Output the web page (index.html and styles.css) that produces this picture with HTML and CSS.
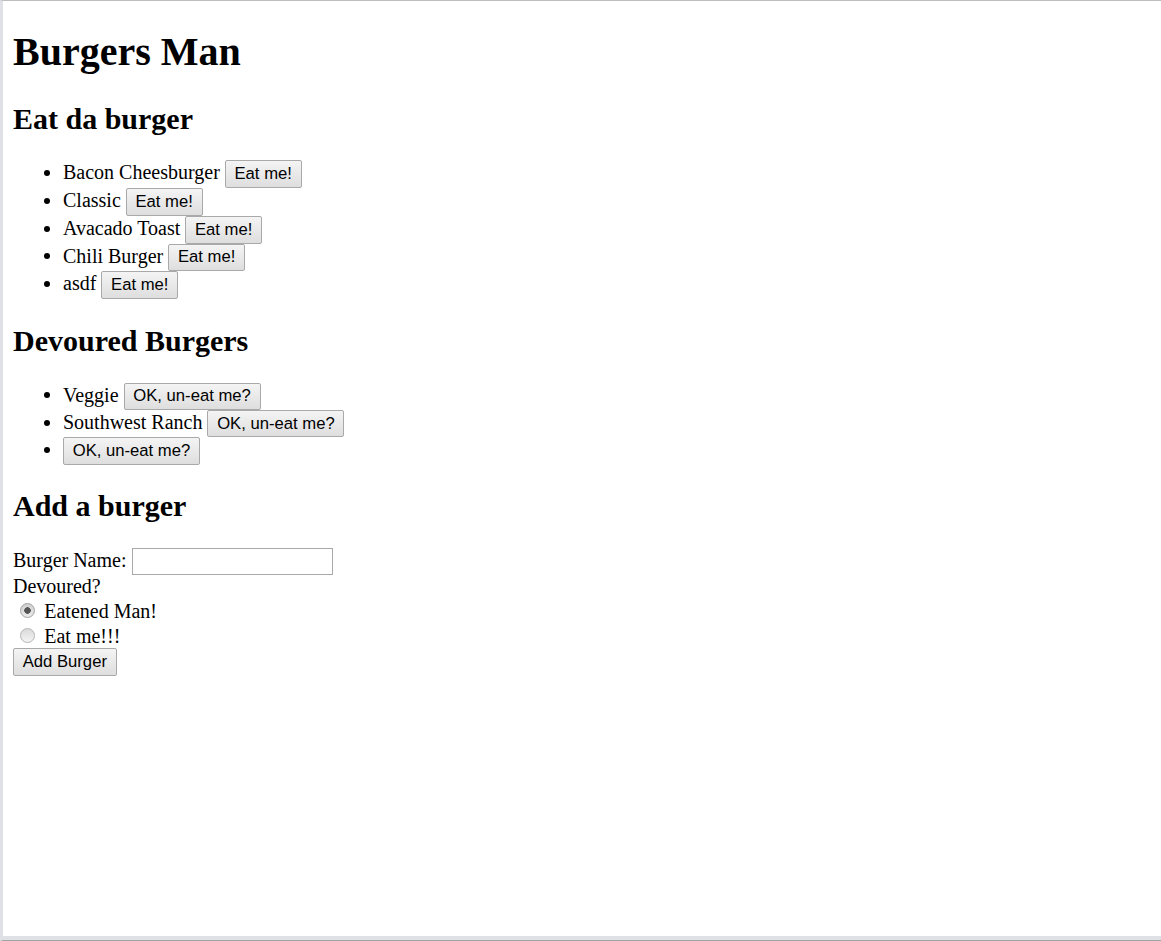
FILE: index.html
```html
<!DOCTYPE html>
<html lang="en">
<head>
<meta charset="utf-8">
<title>Burgers Man</title>
<link rel="stylesheet" href="styles.css">
</head>
<body>
<h1>Burgers Man</h1>
<h2>Eat da burger</h2>
<ul class="burger-list">
  <li>Bacon Cheesburger <button class="btn">Eat me!</button></li>
  <li>Classic <button class="btn">Eat me!</button></li>
  <li>Avacado Toast <button class="btn">Eat me!</button></li>
  <li>Chili Burger <button class="btn">Eat me!</button></li>
  <li>asdf <button class="btn">Eat me!</button></li>
</ul>
<h2>Devoured Burgers</h2>
<ul class="burger-list devoured-list">
  <li>Veggie <button class="btn">OK, un-eat me?</button></li>
  <li>Southwest Ranch <button class="btn">OK, un-eat me?</button></li>
  <li><button class="btn">OK, un-eat me?</button></li>
</ul>
<h2 class="add-title">Add a burger</h2>
<form class="add-form">
  <label for="bn">Burger Name:</label> <input class="text-input" type="text" id="bn"><br>
  <label>Devoured?</label><br>
  <input class="radio" type="radio" name="dev" id="d1" checked> <label for="d1">Eatened Man!</label><br>
  <input class="radio" type="radio" name="dev" id="d2"> <label for="d2">Eat me!!!</label><br>
  <button class="btn" type="button">Add Burger</button>
</form>
</body>
</html>
```
FILE: styles.css
```css
html {
  height: 100vh;
  box-sizing: border-box;
  border-top: 1px solid #bdbdbd;
  border-left: 3px solid #dee1e6;
  border-bottom: 1px solid #a3a3a3;
  box-shadow: inset 0 -4px 0 #dee1e6;
  background: #fff;
}

body {
  margin: 0 10px 10px;
  font-family: "Liberation Serif", "Times New Roman", serif;
  font-size: 20px;
  color: #000;
}

h1 {
  font-size: 40px;
  margin: 26.8px 0;
}

h2 {
  font-size: 30px;
  margin: 24.9px 0;
}

.add-title {
  margin: 24.5px 0 24.9px;
}

.burger-list {
  margin: 20px 0;
  padding-left: 50px;
}

.btn {
  box-sizing: border-box;
  height: 27.7px;
  margin: 0;
  padding: 0 8.7px;
  font-family: "Liberation Sans", Arial, sans-serif;
  font-size: 16.67px;
  color: #000;
  border: 1px solid #a9a9a9;
  border-radius: 2px;
  background: linear-gradient(#f4f4f4, #dedede);
}

.devoured-list .btn {
  height: 27.3px;
}

.add-form .btn {
  height: 28px;
}

.text-input {
  box-sizing: border-box;
  width: 201px;
  height: 27.5px;
  margin: 0;
  padding: 0 2.5px;
  font-family: "Liberation Sans", Arial, sans-serif;
  font-size: 16.67px;
  border: 1px solid #a9a9a9;
  background: #fff;
}

.radio {
  appearance: none;
  -webkit-appearance: none;
  box-sizing: border-box;
  width: 16.25px;
  height: 16.25px;
  margin: 3.75px 3.75px 0 6.25px;
  border: 0;
  border-radius: 50%;
  background: transparent;
  position: relative;
  vertical-align: baseline;
}

.radio::before {
  content: "";
  position: absolute;
  left: 0.5px;
  top: 0.5px;
  width: 15px;
  height: 15px;
  box-sizing: border-box;
  border-radius: 50%;
  border: 1px solid #b4b4b4;
  background: linear-gradient(#dadada, #f4f4f4);
}

.radio:checked::before {
  border-color: #a0a0a0;
  background: radial-gradient(circle, #555 0, #555 3px, transparent 3.5px), linear-gradient(#cfcfcf, #ebebeb);
}
```
